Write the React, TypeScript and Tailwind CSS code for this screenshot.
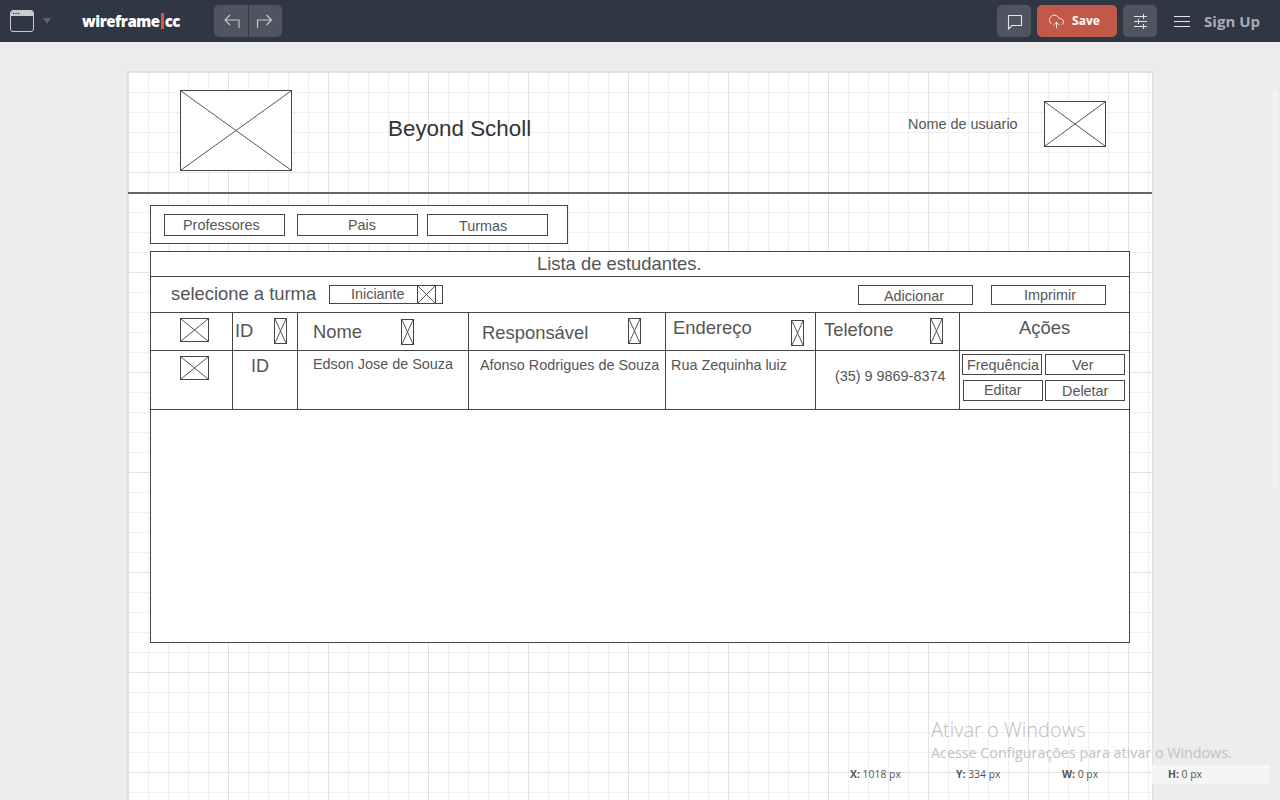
import React from "react";
import { CloudUpload } from "lucide-react";

const T = ({ c, children }: { c: string; children: React.ReactNode }) => (
  <span className={"absolute whitespace-nowrap leading-none text-[#555] font-['Liberation_Sans',sans-serif] " + c}>{children}</span>
);
const Box = ({ c }: { c: string }) => <div className={"absolute border border-[#444] " + c} />;
const Ph = ({ c }: { c: string }) => (
  <div className={"absolute border border-[#444] bg-white " + c}>
    <svg className="w-full h-full block" viewBox="0 0 100 100" preserveAspectRatio="none">
      <path d="M0 0L100 100M100 0L0 100" stroke="#555" strokeWidth="1" vectorEffect="non-scaling-stroke" fill="none" />
    </svg>
  </div>
);
const Dark = ({ children, c }: { children: React.ReactNode; c: string }) => (
  <button className={"flex items-center justify-center bg-[#50545e] text-[#e4e5e7] " + c}>{children}</button>
);

export default function App() {
  return (
    <div className="w-[1280px] h-[800px] overflow-hidden relative bg-[#ececec] flex flex-col font-['Open_Sans',sans-serif]">
      <header className="h-[42px] shrink-0 bg-[#303643] flex items-center relative">
        <svg className="ml-[10px] w-[24px] h-[22px]" viewBox="0 0 24 22" fill="none">
          <rect x="0.5" y="0.5" width="23" height="21" rx="2.5" stroke="#c9cbcf" />
          <path d="M1 3a2 2 0 0 1 2-2h18a2 2 0 0 1 2 2v3H1z" fill="#c9cbcf" />
          <circle cx="3.5" cy="3.5" r="0.8" fill="#303643" />
          <circle cx="6" cy="3.5" r="0.8" fill="#303643" />
          <circle cx="8.5" cy="3.5" r="0.8" fill="#303643" />
        </svg>
        <div className="ml-[9px] w-0 h-0 border-x-[4px] border-x-transparent border-t-[6px] border-t-[#5b606b]" />
        <div className="ml-[31px] text-[15px] font-extrabold text-white tracking-[-0.45px] leading-none flex items-center">
          wireframe<span className="w-[3px] h-[16px] mx-[1px] bg-[#d9553c]" />cc
        </div>
        <div className="ml-[34px] flex rounded-[5px] overflow-hidden gap-px">
          <Dark c="w-[34px] h-[32px]">
            <svg className="w-[20px] h-[20px]" viewBox="0 0 20 20" fill="none" stroke="#c4c6ca" strokeWidth="1.2">
              <path d="M18 17V9H4M9 4L4 9L9 14" />
            </svg>
          </Dark>
          <Dark c="w-[33px] h-[32px]">
            <svg className="w-[21px] h-[20px]" viewBox="0 0 21 20" fill="none" stroke="#c4c6ca" strokeWidth="1.2">
              <path d="M2.5 17V9H16.5M11.5 4L16.5 9L11.5 14" />
            </svg>
          </Dark>
        </div>
        <div className="ml-auto flex items-center">
          <Dark c="w-[34px] h-[32px] rounded-[5px]">
            <svg className="w-[34px] h-[32px]" viewBox="0 0 34 32" fill="none" stroke="#e4e5e7" strokeWidth="1.1">
              <path d="M11.5 10.5H24.5V20.5H15L11.5 24Z" />
            </svg>
          </Dark>
          <button className="ml-[6px] w-[80px] h-[32px] rounded-[5px] bg-[#c0594a] text-white flex items-center pl-[11px] gap-[7px] text-[12px] font-bold">
            <CloudUpload size={17} strokeWidth={1.2} />Save
          </button>
          <Dark c="ml-[6px] w-[34px] h-[32px] rounded-[5px]">
            <svg className="w-[34px] h-[32px]" viewBox="0 0 34 32" fill="none" stroke="#e4e5e7" strokeWidth="1">
              <path d="M11 11.5H24M20.5 9V14M11 16.5H24M15.5 14V19M11 21.5H24M20.5 19V24" />
            </svg>
          </Dark>
          <div className="ml-[17px] w-[16px] flex flex-col gap-[4px]">
            <div className="h-px bg-[#e4e5e7]" /><div className="h-px bg-[#e4e5e7]" /><div className="h-px bg-[#e4e5e7]" />
          </div>
          <span className="ml-[14px] mr-[20px] text-[15px] font-bold text-[#a9acb2]">Sign Up</span>
        </div>
      </header>

      <main className="flex-1 relative pl-[127px] pt-[29px]">
        <div className="relative w-[1026px] h-[800px] border border-[#dedede] bg-white bg-[image:linear-gradient(to_right,#e2e2e2_1px,transparent_1px),linear-gradient(to_bottom,#e2e2e2_1px,transparent_1px),linear-gradient(to_right,#efefef_1px,transparent_1px),linear-gradient(to_bottom,#efefef_1px,transparent_1px)] bg-size-[100px_100px,100px_100px,20px_20px,20px_20px]">
          <Ph c="left-[52px] top-[18px] w-[112px] h-[81px]" />
          <T c="left-[260px] top-[46px] text-[22.4px] text-[#333]!">Beyond Scholl</T>
          <T c="left-[780px] top-[45px] text-[14.4px]">Nome de usuario</T>
          <Ph c="left-[916px] top-[29px] w-[62px] h-[46px]" />
          <div className="absolute left-0 top-[120px] w-full h-[2px] bg-[#666]" />

          <div className="absolute left-[22px] top-[133px] w-[418px] h-[39px] border border-[#444] bg-white" />
          <Box c="left-[36px] top-[142px] w-[121px] h-[22px]" />
          <T c="left-[55px] top-[146px] text-[14.4px]">Professores</T>
          <Box c="left-[169px] top-[142px] w-[121px] h-[22px]" />
          <T c="left-[220px] top-[146px] text-[14.4px]">Pais</T>
          <Box c="left-[299px] top-[142px] w-[121px] h-[22px]" />
          <T c="left-[331px] top-[147px] text-[14.4px]">Turmas</T>

          <div className="absolute left-[22px] top-[179px] w-[980px] h-[392px] border border-[#444] bg-white" />
          <div className="absolute left-[22px] top-[204px] w-[980px] h-px bg-[#444]" />
          <div className="absolute left-[22px] top-[240px] w-[980px] h-px bg-[#444]" />
          <div className="absolute left-[22px] top-[278px] w-[980px] h-px bg-[#444]" />
          <div className="absolute left-[22px] top-[337px] w-[980px] h-px bg-[#444]" />
          <div className="absolute left-[104px] top-[240px] w-px h-[98px] bg-[#444]" />
          <div className="absolute left-[169px] top-[240px] w-px h-[98px] bg-[#444]" />
          <div className="absolute left-[340px] top-[240px] w-px h-[98px] bg-[#444]" />
          <div className="absolute left-[537px] top-[240px] w-px h-[98px] bg-[#444]" />
          <div className="absolute left-[687px] top-[240px] w-px h-[98px] bg-[#444]" />
          <div className="absolute left-[831px] top-[240px] w-px h-[98px] bg-[#444]" />

          <T c="left-[409px] top-[183px] text-[18.4px]">Lista de estudantes.</T>
          <T c="left-[43px] top-[213px] text-[18.4px]">selecione a turma</T>
          <Box c="left-[201px] top-[213px] w-[114px] h-[19px]" />
          <T c="left-[223px] top-[215px] text-[14.4px]">Iniciante</T>
          <Ph c="left-[289px] top-[213px] w-[19px] h-[19px]" />
          <Box c="left-[730px] top-[213px] w-[115px] h-[20px]" />
          <T c="left-[756px] top-[217px] text-[14.4px]">Adicionar</T>
          <Box c="left-[863px] top-[213px] w-[115px] h-[20px]" />
          <T c="left-[896px] top-[216px] text-[14.4px]">Imprimir</T>

          <Ph c="left-[52px] top-[246px] w-[29px] h-[24px]" />
          <T c="left-[107px] top-[250px] text-[18.4px]">ID</T>
          <Ph c="left-[146px] top-[246px] w-[13px] h-[26px]" />
          <T c="left-[185px] top-[251px] text-[18.4px]">Nome</T>
          <Ph c="left-[273px] top-[247px] w-[13px] h-[26px]" />
          <T c="left-[354px] top-[252px] text-[18.4px]">Responsável</T>
          <Ph c="left-[500px] top-[246px] w-[13px] h-[26px]" />
          <T c="left-[545px] top-[247px] text-[18.4px]">Endereço</T>
          <Ph c="left-[663px] top-[248px] w-[13px] h-[26px]" />
          <T c="left-[696px] top-[249px] text-[18.4px]">Telefone</T>
          <Ph c="left-[802px] top-[246px] w-[13px] h-[26px]" />
          <T c="left-[891px] top-[247px] text-[18.4px]">Ações</T>

          <Ph c="left-[52px] top-[284px] w-[29px] h-[24px]" />
          <T c="left-[123px] top-[285px] text-[18px]">ID</T>
          <T c="left-[185px] top-[285px] text-[14.4px]">Edson Jose de Souza</T>
          <T c="left-[352px] top-[286px] text-[14.4px]">Afonso Rodrigues de Souza</T>
          <T c="left-[543px] top-[286px] text-[14.4px]">Rua Zequinha luiz</T>
          <T c="left-[707px] top-[297px] text-[14.4px]">(35) 9 9869-8374</T>

          <Box c="left-[834px] top-[282px] w-[80px] h-[21px]" />
          <T c="left-[839px] top-[286px] text-[14.4px]">Frequência</T>
          <Box c="left-[917px] top-[282px] w-[80px] h-[21px]" />
          <T c="left-[944px] top-[286px] text-[14.4px]">Ver</T>
          <Box c="left-[835px] top-[308px] w-[80px] h-[21px]" />
          <T c="left-[856px] top-[311px] text-[14.4px]">Editar</T>
          <Box c="left-[917px] top-[308px] w-[80px] h-[21px]" />
          <T c="left-[934px] top-[312px] text-[14.4px]">Deletar</T>
        </div>

        <div className="absolute left-[1272px] top-[47px] w-[6px] h-[400px] rounded-[3px] bg-[#f1f1f1]" />
        <div className="absolute left-[1152px] top-[723px] w-[118px] h-[19px] bg-[#f5f5f5]" />
        <div className="absolute left-[850px] top-[727px] flex text-[10.4px] leading-none text-[#555]">
          <span className="w-[106px]"><b>X:</b> 1018 px</span>
          <span className="w-[106px]"><b>Y:</b> 334 px</span>
          <span className="w-[106px]"><b>W:</b> 0 px</span>
          <span><b>H:</b> 0 px</span>
        </div>
        <div className="absolute left-[931px] top-[678px] text-[20px] font-light leading-none text-[#bdbdbd]">Ativar o Windows</div>
        <div className="absolute left-[931px] top-[704px] text-[14.3px] leading-none text-[#c2c2c2]">Acesse Configurações para ativar o Windows.</div>
      </main>
    </div>
  );
}
